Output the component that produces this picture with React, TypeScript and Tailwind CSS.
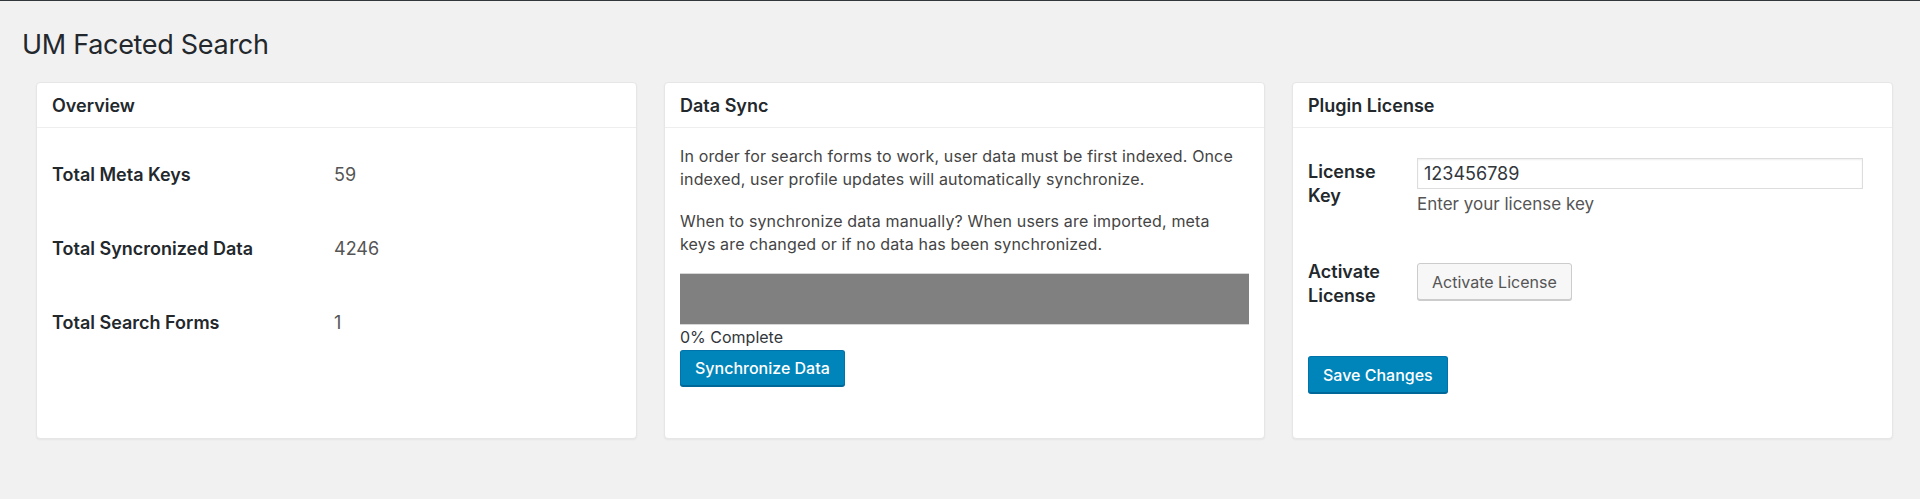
import React from 'react';

const font = { fontFamily: 'Inter, Roboto, "Noto Sans", "Liberation Sans", sans-serif' };

const Card = ({ title, children }: { title: string; children: React.ReactNode }) => (
  <div className="w-[601px] h-[357px] bg-white rounded-[4px] border border-[#e6e6e6] shadow-[0_1px_2px_rgba(0,0,0,0.05)] flex flex-col">
    <div className="h-[45px] flex items-center px-[15px] border-b border-[#eeeeee]">
      <h2 className="text-[18px] font-semibold text-[#23282d]">{title}</h2>
    </div>
    <div className="flex-1">{children}</div>
  </div>
);

const stats = [
  { label: 'Total Meta Keys', value: '59' },
  { label: 'Total Syncronized Data', value: '4246' },
  { label: 'Total Search Forms', value: '1' },
];

const primaryBtn =
  'h-[36px] px-[14px] rounded-[3px] bg-[#0085ba] border border-[#0073aa] border-b-[#006799] shadow-[0_1px_0_#006799] text-white text-[16px] font-medium';

export default function App() {
  return (
    <div className="min-h-[499px] bg-[#f1f1f1] border-t border-[#32373c]" style={font}>
      <h1 className="pl-[22px] pt-[26px] text-[27px] leading-[36px] text-[#23282d] font-normal tracking-[-0.3px]">UM Faceted Search</h1>

      <div className="flex gap-[27px] pl-[36px] mt-[19px]">
        <Card title="Overview">
          <div className="px-[15px] pt-[34px] flex flex-col gap-[50px]">
            {stats.map((s) => (
              <div key={s.label} className="flex items-center h-[24px] text-[18px]">
                <span className="w-[282px] font-semibold text-[#23282d]">{s.label}</span>
                <span className="text-[#555]">{s.value}</span>
              </div>
            ))}
          </div>
        </Card>

        <Card title="Data Sync">
          <div className="px-[15px] pt-[17px] text-[16px] leading-[23px] text-[#444] tracking-[0.15px]">
            <p>In order for search forms to work, user data must be first indexed. Once indexed, user profile updates will automatically synchronize.</p>
            <p className="mt-[19px]">When to synchronize data manually? When users are imported, meta keys are changed or if no data has been synchronized.</p>
            <div className="mt-[17px] h-[52px] bg-[#808080] border-y border-[#d6d6d6]" />
            <div className="mt-[1px] text-[#32373c] leading-[23px] tracking-normal">0% Complete</div>
            <button className={`mt-[1px] tracking-normal ${primaryBtn}`}>Synchronize Data</button>
          </div>
        </Card>

        <Card title="Plugin License">
          <div className="px-[15px] pt-[30px] text-[18px] text-[#23282d]">
            <div className="flex">
              <div className="w-[109px] font-semibold leading-[24px] pt-[2px]">License<br />Key</div>
              <div>
                <input
                  defaultValue="123456789"
                  className="w-[446px] h-[31px] border border-[#dddddd] shadow-[inset_0_1px_2px_rgba(0,0,0,0.07)] px-[6px] text-[18px] text-[#32373c] outline-none"
                  style={font}
                />
                <div className="mt-[4px] text-[17px] text-[#555] leading-[22px]">Enter your license key</div>
              </div>
            </div>
            <div className="flex mt-[45px]">
              <div className="w-[109px] font-semibold leading-[24px]">Activate<br />License</div>
              <div className="pt-[3px]">
                <button className="h-[37px] px-[14px] rounded-[3px] bg-[#f7f7f7] border border-[#cccccc] shadow-[0_1px_0_#cccccc] text-[#555] text-[16px]">
                  Activate License
                </button>
              </div>
            </div>
            <button className={`mt-[48px] ${primaryBtn} h-[37px]`}>Save Changes</button>
          </div>
        </Card>
      </div>
    </div>
  );
}
